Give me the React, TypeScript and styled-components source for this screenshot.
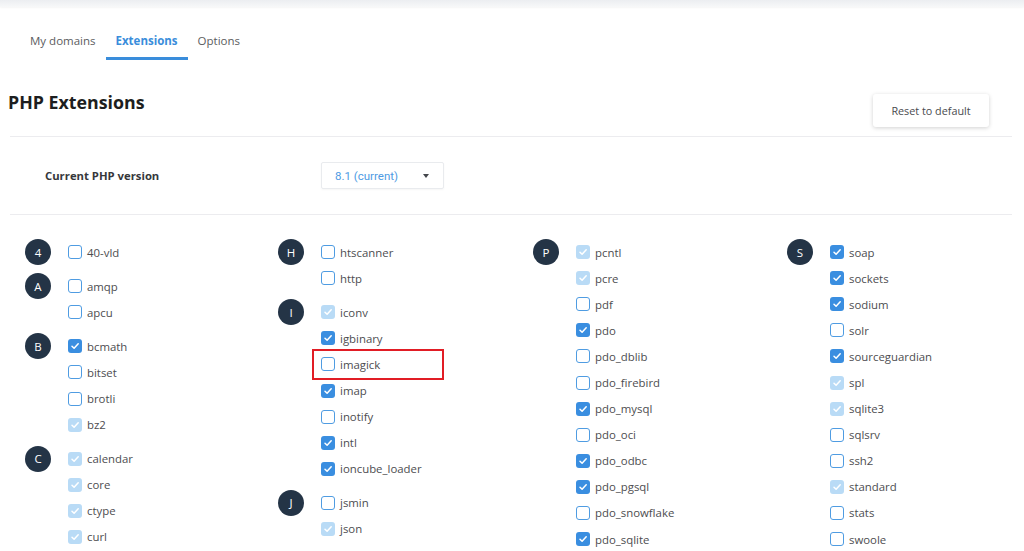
import styled, { createGlobalStyle } from "styled-components";

const GlobalStyle = createGlobalStyle`
  html, body {
    margin: 0;
    padding: 0;
    background: #ffffff;
  }
  body {
    font-family: "Open Sans", "Noto Sans", sans-serif;
    color: #4d4d4f;
  }
`;

type State = "on" | "off" | "locked";

interface Ext {
  name: string;
  state: State;
  marked?: boolean;
}

interface Group {
  letter: string;
  items: Ext[];
}

const ext = (name: string, state: State, marked?: boolean): Ext => ({
  name,
  state,
  marked,
});

const columns: Group[][] = [
  [
    { letter: "4", items: [ext("40-vld", "off")] },
    { letter: "A", items: [ext("amqp", "off"), ext("apcu", "off")] },
    {
      letter: "B",
      items: [
        ext("bcmath", "on"),
        ext("bitset", "off"),
        ext("brotli", "off"),
        ext("bz2", "locked"),
      ],
    },
    {
      letter: "C",
      items: [
        ext("calendar", "locked"),
        ext("core", "locked"),
        ext("ctype", "locked"),
        ext("curl", "locked"),
      ],
    },
  ],
  [
    { letter: "H", items: [ext("htscanner", "off"), ext("http", "off")] },
    {
      letter: "I",
      items: [
        ext("iconv", "locked"),
        ext("igbinary", "on"),
        ext("imagick", "off", true),
        ext("imap", "on"),
        ext("inotify", "off"),
        ext("intl", "on"),
        ext("ioncube_loader", "on"),
      ],
    },
    { letter: "J", items: [ext("jsmin", "off"), ext("json", "locked")] },
  ],
  [
    {
      letter: "P",
      items: [
        ext("pcntl", "locked"),
        ext("pcre", "locked"),
        ext("pdf", "off"),
        ext("pdo", "on"),
        ext("pdo_dblib", "off"),
        ext("pdo_firebird", "off"),
        ext("pdo_mysql", "on"),
        ext("pdo_oci", "off"),
        ext("pdo_odbc", "on"),
        ext("pdo_pgsql", "on"),
        ext("pdo_snowflake", "off"),
        ext("pdo_sqlite", "on"),
      ],
    },
  ],
  [
    {
      letter: "S",
      items: [
        ext("soap", "on"),
        ext("sockets", "on"),
        ext("sodium", "on"),
        ext("solr", "off"),
        ext("sourceguardian", "on"),
        ext("spl", "locked"),
        ext("sqlite3", "locked"),
        ext("sqlsrv", "off"),
        ext("ssh2", "off"),
        ext("standard", "locked"),
        ext("stats", "off"),
        ext("swoole", "off"),
      ],
    },
  ],
];

const TopShade = styled.div`
  height: 7px;
  background: linear-gradient(#eceef1, #f7f8f9);
  box-shadow: 0 1px 2px rgba(0, 0, 0, 0.04);
`;

const Page = styled.div`
  padding: 0 12px 0 8px;
`;

const Tabs = styled.nav`
  display: flex;
  padding: 15px 0 0 12px;
`;

const Tab = styled.div<{ active?: boolean }>`
  padding: 10px 10px 7px;
  font-size: 11.5px;
  line-height: 18px;
  font-weight: ${({ active }) => (active ? 700 : 400)};
  color: ${({ active }) => (active ? "#3a8ddb" : "#5b5c60")};
  border-bottom: 3px solid ${({ active }) => (active ? "#3a8ddb" : "transparent")};
`;

const Header = styled.div`
  display: flex;
  justify-content: space-between;
  align-items: flex-start;
  padding-bottom: 9px;
  border-bottom: 1px solid #ececef;
  margin-left: 2px;
`;

const Title = styled.h1`
  margin: 29px 0 0 -2px;
  font-size: 17.8px;
  line-height: 26px;
  font-weight: 700;
  color: #1d1e20;
`;

const ResetButton = styled.button`
  margin: 34px 23px 0 0;
  width: 116px;
  height: 33px;
  border: none;
  border-radius: 3px;
  background: #ffffff;
  box-shadow: 0 1px 4px rgba(0, 0, 0, 0.18);
  font-family: "Open Sans", sans-serif;
  font-size: 10.8px;
  color: #4a4b4f;
`;

const VersionRow = styled.div`
  display: flex;
  align-items: center;
  height: 77px;
  padding-left: 35px;
  margin-left: 2px;
  border-bottom: 1px solid #ececef;
`;

const VersionLabel = styled.div`
  width: 276px;
  font-size: 11.3px;
  font-weight: 700;
  color: #36373b;
`;

const Select = styled.div`
  display: flex;
  align-items: center;
  justify-content: space-between;
  box-sizing: border-box;
  width: 123px;
  height: 27px;
  padding: 0 14px 0 13px;
  border: 1px solid #e9ebee;
  border-radius: 2px;
  box-shadow: 0 1px 2px rgba(0, 0, 0, 0.04);
  font-family: Roboto, sans-serif;
  font-size: 11.5px;
  color: #4e9be3;
`;

const Caret = styled.span`
  width: 0;
  height: 0;
  border-left: 3.5px solid transparent;
  border-right: 3.5px solid transparent;
  border-top: 4px solid #44464b;
`;

const Grid = styled.div`
  display: grid;
  grid-template-columns: 253px 255px 254px 254px;
  padding: 24px 0 0 17px;
`;

const Column = styled.div`
  display: flex;
  flex-direction: column;
  gap: 8px;
`;

const GroupRow = styled.div`
  display: flex;
  align-items: flex-start;
`;

const Badge = styled.div`
  flex: none;
  width: 26px;
  height: 26px;
  border-radius: 50%;
  background: #243446;
  color: #ffffff;
  font-size: 11.5px;
  display: flex;
  align-items: center;
  justify-content: center;
  margin-right: 17px;
`;

const List = styled.div`
  display: flex;
  flex-direction: column;
`;

const Item = styled.label<{ marked?: boolean }>`
  position: relative;
  display: flex;
  align-items: center;
  height: 26.1px;
  font-size: 11.4px;
  color: #4d4d50;

  &::after {
    content: "";
    display: ${({ marked }) => (marked ? "block" : "none")};
    position: absolute;
    left: -9px;
    top: -2px;
    width: 132px;
    height: 31px;
    box-sizing: border-box;
    border: 2px solid #e11d25;
  }
`;

const Box = styled.span<{ state: State }>`
  flex: none;
  box-sizing: border-box;
  width: 14px;
  height: 14px;
  margin-right: 5px;
  border-radius: 3px;
  display: flex;
  align-items: center;
  justify-content: center;
  border: ${({ state }) =>
    state === "off" ? "1.5px solid #4f9ce2" : "none"};
  background: ${({ state }) =>
    state === "on" ? "#3a8ee0" : state === "locked" ? "#b9dbf6" : "#ffffff"};
`;

function Check() {
  return (
    <svg width="10" height="10" viewBox="0 0 10 10">
      <path
        d="M2 5.2 L4.1 7.3 L8.2 2.8"
        fill="none"
        stroke="#ffffff"
        strokeWidth="1.5"
        strokeLinecap="round"
        strokeLinejoin="round"
      />
    </svg>
  );
}

export default function App() {
  return (
    <>
      <GlobalStyle />
      <TopShade />
      <Page>
        <Tabs>
          <Tab>My domains</Tab>
          <Tab active>Extensions</Tab>
          <Tab>Options</Tab>
        </Tabs>
        <Header>
          <Title>PHP Extensions</Title>
          <ResetButton>Reset to default</ResetButton>
        </Header>
        <VersionRow>
          <VersionLabel>Current PHP version</VersionLabel>
          <Select>
            <span>8.1 (current)</span>
            <Caret />
          </Select>
        </VersionRow>
        <Grid>
          {columns.map((groups, ci) => (
            <Column key={ci}>
              {groups.map((group) => (
                <GroupRow key={group.letter}>
                  <Badge>{group.letter}</Badge>
                  <List>
                    {group.items.map((item) => (
                      <Item key={item.name} marked={item.marked}>
                        <Box state={item.state}>
                          {item.state !== "off" && <Check />}
                        </Box>
                        {item.name}
                      </Item>
                    ))}
                  </List>
                </GroupRow>
              ))}
            </Column>
          ))}
        </Grid>
      </Page>
    </>
  );
}
